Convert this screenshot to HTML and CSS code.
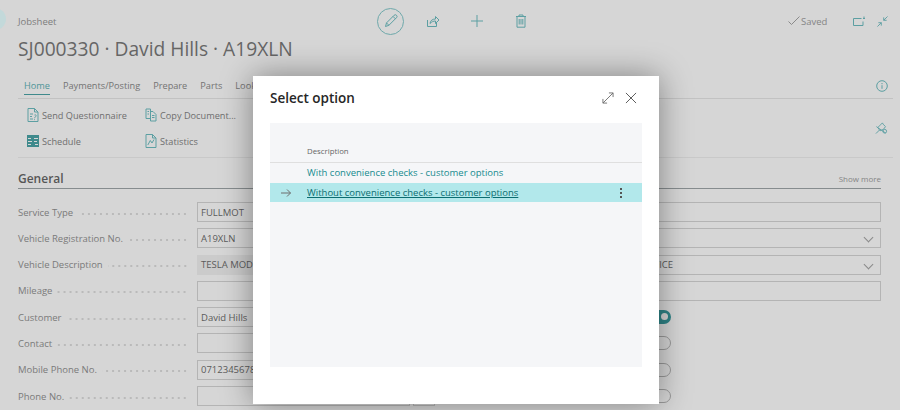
FILE: index.html
```html
<!DOCTYPE html>
<html lang="en">
<head>
  <meta charset="UTF-8">
  <title>Jobsheet</title>
  <link rel="stylesheet" href="styles.css">
</head>
<body>
  <div class="back-blob"></div>
  <div class="page">
    <header class="top-bar">
      <span class="crumb">Jobsheet</span>
      <div class="top-actions">
        <span class="edit-btn">
          <svg width="16" height="16" viewBox="0 0 16 16" class="ico"><path d="M2.500 13.500l1-3.600 7.600-7.600a1.600 1.600 0 0 1 2.400 2.400l-7.600 7.600zM3.500 9.900l2.400 2.400M10 3.400l2.400 2.400"/></svg>
        </span>
        <svg width="14" height="14" viewBox="0 0 14 14" class="ico share"><path d="M1.500 6v6.500h9V9M4 9.500c.3-3 2.500-4.500 5.500-4.500V2.500L13 6l-3.500 3.500V7C7.500 7 5.500 7.800 4 9.500z"/></svg>
        <svg width="14" height="14" viewBox="0 0 14 14" class="ico plus"><path d="M7 1v12M1 7h12"/></svg>
        <svg width="12" height="14" viewBox="0 0 12 14" class="ico bin"><path d="M4 2V1h4v1M1 2.500h10M2 2.500v10.700h8V2.500M4.200 5v5.500M6 5v5.500M7.800 5v5.500"/></svg>
      </div>
      <div class="top-right">
        <span class="saved">
          <svg width="12" height="10" viewBox="0 0 12 10" class="ico-grey"><path d="M.5 5.500l3 3L11.500.5"/></svg>
          Saved
        </span>
        <svg width="12" height="10" viewBox="0 0 12 10" class="ico"><path d="M8.500 2.500H.5v7h9.500V5.500M10 2.500h2M11 .5v1.500"/></svg>
        <svg width="11" height="11" viewBox="0 0 12 12" class="ico"><path d="M11.500.5L7.300 4.700M7.300 1.500v3.200h3.200M.5 11.500l4.200-4.200M1.500 7.300h3.200v3.200"/></svg>
      </div>
    </header>

    <h1 class="title">SJ000330 · David Hills · A19XLN</h1>

    <nav class="tabs">
      <a class="tab tab-active">Home</a>
      <a class="tab">Payments/Posting</a>
      <a class="tab">Prepare</a>
      <a class="tab">Parts</a>
      <a class="tab">Lookup</a>
      <svg width="12" height="12" viewBox="0 0 12 12" class="ico info"><circle cx="6" cy="6" r="5.300"/><path d="M6 5.200v3.600M6 3v1.200"/></svg>
    </nav>

    <div class="ribbon">
      <div class="ribbon-grid">
        <span class="rb-item">
          <svg width="12" height="14" viewBox="0 0 12 14" class="ico"><path d="M7.500.5H1v13h10V4zM7.500.5V4H11M3 6h3M3 8.500h2M3 11h3M7.500 7c1.500-.8 2.500 1 .8 2-.6.3-.8.7-.8 1.200M7.500 11.300v.8"/></svg>
          Send Questionnaire
        </span>
        <span class="rb-item">
          <svg width="12" height="14" viewBox="0 0 12 14" class="ico"><path d="M1 1h4.500v9.500H1zM5.500 3.500H8L11 6.500v6.500H5.500zM7 7.500h2.500M7 9.500h2.500M2.500 3.500h1.500M2.500 6h1.500"/></svg>
          Copy Document...
        </span>
        <span class="rb-item">
          <svg width="12" height="12" viewBox="0 0 12 12"><path d="M0 0h12v12H0z" fill="#3f8a8c"/><path d="M1 3h3v1H1zM7 3h4v1H7zM1 6h4v1H1zM7 6h3v1H7zM1 9h3v1H1zM8 9h3v1H8z" fill="#d6d6d6"/></svg>
          Schedule
        </span>
        <span class="rb-item">
          <svg width="12" height="14" viewBox="0 0 12 14" class="ico"><path d="M7.500.5H1v13h10V4zM7.500.5V4H11M2.800 11l2.500-4.500 1.700 2.500 2-3.500"/></svg>
          Statistics
        </span>
      </div>
      <svg width="13" height="14" viewBox="0 0 14 14" class="ico pin"><path d="M1 13l3.800-3.800M3 6.500l5-5 .8 1.500 2.500 2.500L9 8.500 5.500 10zM1.500 5.500l10 7"/><circle cx="10.500" cy="10.500" r="2"/></svg>
    </div>

    <section class="general">
      <div class="sec-head">
        <h2>General</h2>
        <span class="show-more">Show more</span>
      </div>
      <div class="form">
        <div class="form-col">
          <div class="row"><span class="lead"><label>Service Type</label><span class="dots"></span></span><span class="input">FULLMOT</span></div>
          <div class="row"><span class="lead"><label>Vehicle Registration No.</label><span class="dots"></span></span><span class="input">A19XLN</span></div>
          <div class="row"><span class="lead"><label>Vehicle Description</label><span class="dots"></span></span><span class="input readonly">TESLA MODEL 3</span></div>
          <div class="row"><span class="lead"><label>Mileage</label><span class="dots"></span></span><span class="input"></span></div>
          <div class="row"><span class="lead"><label>Customer</label><span class="dots"></span></span><span class="input">David Hills</span></div>
          <div class="row"><span class="lead"><label>Contact</label><span class="dots"></span></span><span class="input"></span></div>
          <div class="row"><span class="lead"><label>Mobile Phone No.</label><span class="dots"></span></span><span class="input">07123456789</span></div>
          <div class="row"><span class="lead"><label>Phone No.</label><span class="dots"></span></span><span class="input"></span><span class="input small"></span></div>
        </div>
        <div class="form-col right">
          <div class="row"><span class="input"></span></div>
          <div class="row"><span class="input select"></span></div>
          <div class="row"><span class="input select">OFFICE</span></div>
          <div class="row"><span class="input"></span></div>
          <div class="row"><span class="toggle on"></span></div>
          <div class="row"><span class="toggle"></span></div>
          <div class="row"><span class="toggle"></span></div>
          <div class="row"><span class="toggle"></span></div>
        </div>
      </div>
    </section>
  </div>

  <div class="modal">
    <div class="modal-head">
      <h3>Select option</h3>
      <svg width="12" height="12" viewBox="0 0 13 13" class="ico-mid"><path d="M1 12L12 1M7.500 1H12v4.500M1 7.500V12h4.500"/></svg>
      <svg width="12" height="12" viewBox="0 0 13 13" class="ico-dark"><path d="M1 1l11 11M12 1L1 12"/></svg>
    </div>
    <div class="list-panel">
      <div class="list-head">Description</div>
      <div class="list-row"><span class="row-link">With convenience checks - customer options</span></div>
      <div class="list-row selected">
        <svg width="10" height="8" viewBox="0 0 10 8" class="ico-mid arrow"><path d="M0 4h9.500M6 .5L9.500 4 6 7.500"/></svg>
        <span class="row-link">Without convenience checks - customer options</span>
        <span class="more"></span>
      </div>
    </div>
  </div>
</body>
</html>
```

FILE: styles.css
```css
* {
  box-sizing: border-box;
  margin: 0;
  padding: 0;
}
body {
  height: 410px;
  overflow: hidden;
  background: #d6d6d6;
  color: #6e6e6e;
  font-family: "Open Sans", "Liberation Sans", sans-serif;
  font-size: 9.5px;
}
svg {
  flex: none;
  fill: none;
}
.ico {
  stroke: #5c9fa2;
  stroke-width: 1;
}
.ico-grey {
  stroke: #8a8a8a;
  stroke-width: 1;
}
.ico-mid {
  stroke: #6f6f6f;
  stroke-width: 1;
}
.ico-dark {
  stroke: #505050;
  stroke-width: 1;
}
.back-blob {
  position: absolute;
  left: -16px;
  top: 8px;
  width: 22px;
  height: 22px;
  border-radius: 50%;
  background: #c3d9da;
}
.page {
  padding: 0 19px 0 18px;
}

/* top bar */
.top-bar {
  display: flex;
  align-items: center;
  height: 41px;
  margin-right: -7px;
  padding-top: 1px;
}
.crumb {
  width: 359px;
  color: #7d7d7d;
}
.top-actions {
  display: flex;
  align-items: center;
}
.edit-btn {
  display: flex;
  align-items: center;
  justify-content: center;
  width: 27px;
  height: 27px;
  border: 1px solid #6fa9ab;
  border-radius: 50%;
}
.share {
  margin-left: 22px;
}
.plus {
  margin-left: 30px;
}
.bin {
  margin-left: 31px;
}
.top-right {
  display: flex;
  align-items: center;
  margin-left: auto;
}
.saved {
  display: flex;
  align-items: center;
  gap: 1px;
  width: 65px;
  color: #858585;
}
.top-right .ico + .ico {
  margin-left: 12px;
}

.title {
  height: 30px;
  font-size: 19.2px;
  font-weight: 400;
  line-height: 15px;
  color: #666;
}

/* tabs */
.tabs {
  display: flex;
  align-items: flex-start;
  gap: 13px;
  height: 20px;
  margin: 8px -12px 0 0;
  padding: 0 5px 0 6px;
  border-bottom: 1px solid #c2c2c2;
  font-size: 9.2px;
}
.tab {
  padding-bottom: 1px;
  line-height: 14px;
  color: #737373;
}
.tab-active {
  color: #4f9598;
  border-bottom: 1px solid #3f8a8c;
}
.info {
  margin: 1px 0 0 auto;
}

/* ribbon */
.ribbon {
  display: flex;
  height: 59px;
  margin-right: -12px;
  padding: 3px 5px 0 9px;
  border-bottom: 1px solid #c9c9c9;
  font-size: 9.2px;
}
.ribbon-grid {
  display: grid;
  grid-template-columns: 118px 118px;
  grid-auto-rows: 26px;
  align-items: center;
}
.rb-item {
  display: flex;
  align-items: center;
  gap: 3px;
  white-space: nowrap;
}
.pin {
  margin: 19px 0 0 auto;
}

/* general section */
.sec-head {
  display: flex;
  align-items: center;
  justify-content: space-between;
  height: 31px;
  padding-top: 10px;
  border-bottom: 1px solid #868c8e;
}
.sec-head h2 {
  font-size: 12px;
  font-weight: 600;
  color: #565656;
}
.show-more {
  font-size: 8px;
  color: #858585;
}
.form {
  display: grid;
  grid-template-columns: 417px 446px;
  justify-content: space-between;
  margin-top: 13px;
}
.form-col {
  display: flex;
  flex-direction: column;
  gap: 6.300px;
}
.row {
  display: flex;
  align-items: center;
  height: 20px;
}
.lead {
  display: flex;
  align-items: center;
  flex: none;
  width: 179px;
}
.row label {
  color: #7a7a7a;
  white-space: nowrap;
}
.dots {
  flex: 1;
  height: 2px;
  margin: 3px 9px 0 5px;
  background: radial-gradient(circle, #b0b0b0 0.6px, transparent 1px) 100% 0 / 6px 2px repeat-x;
}
.input {
  display: flex;
  align-items: center;
  flex: none;
  width: 213px;
  height: 20px;
  padding-left: 3px;
  border: 1px solid #b4b4b4;
  color: #5b5b5b;
  white-space: nowrap;
}
.input.readonly {
  border: 0;
  padding-left: 4px;
  background: #cbcbcb;
}
.input.small {
  width: 22px;
  margin-left: 3px;
}
.right {
  padding-left: 191px;
}
.right .input {
  width: 255px;
  padding-left: 15px;
}
.select {
  position: relative;
}
.select::after {
  content: "";
  position: absolute;
  right: 8px;
  top: 5px;
  width: 6px;
  height: 6px;
  border-right: 1px solid #8a8a8a;
  border-bottom: 1px solid #8a8a8a;
  transform: rotate(45deg);
}
.toggle {
  width: 32px;
  height: 14px;
  margin-left: 13px;
  border: 1px solid #9a9a9a;
  border-radius: 7px;
}
.toggle.on {
  position: relative;
  border: 3.500px solid #2f8487;
  background: #2f8487;
}
.toggle.on::after {
  content: "";
  position: absolute;
  right: 0;
  top: 0;
  width: 7px;
  height: 7px;
  border-radius: 50%;
  background: #d6d6d6;
}

/* dialog */
.modal {
  position: absolute;
  left: 253px;
  top: 76px;
  width: 406px;
  height: 328px;
  padding: 0 17px;
  background: #fff;
  box-shadow: 0 0 30px rgba(0, 0, 0, 0.4);
}
.modal-head {
  display: flex;
  align-items: center;
  gap: 11px;
  height: 47px;
  padding: 0 5px 4px 0;
}
.modal-head h3 {
  flex: 1;
  font-size: 13.5px;
  font-weight: 600;
  color: #262626;
}
.list-panel {
  height: 244px;
  background: #f5f6f8;
}
.list-head {
  display: flex;
  align-items: flex-end;
  height: 40px;
  padding: 0 0 6px 37px;
  border-bottom: 1px solid #dfdfdf;
  font-size: 7.8px;
  color: #666;
}
.list-row {
  position: relative;
  display: flex;
  align-items: center;
  height: 19.500px;
  padding-left: 37px;
  color: #168b8f;
}
.list-row.selected {
  background: #b2e8eb;
}
.row-link {
  white-space: nowrap;
}
.selected .row-link {
  color: #0b6d71;
  text-decoration: underline;
}
.arrow {
  position: absolute;
  left: 11px;
  top: 6px;
}
.more {
  position: absolute;
  right: 20px;
  top: 5px;
  width: 2px;
  height: 2px;
  background: #555;
  box-shadow: 0 4px 0 #555, 0 8px 0 #555;
}
```
